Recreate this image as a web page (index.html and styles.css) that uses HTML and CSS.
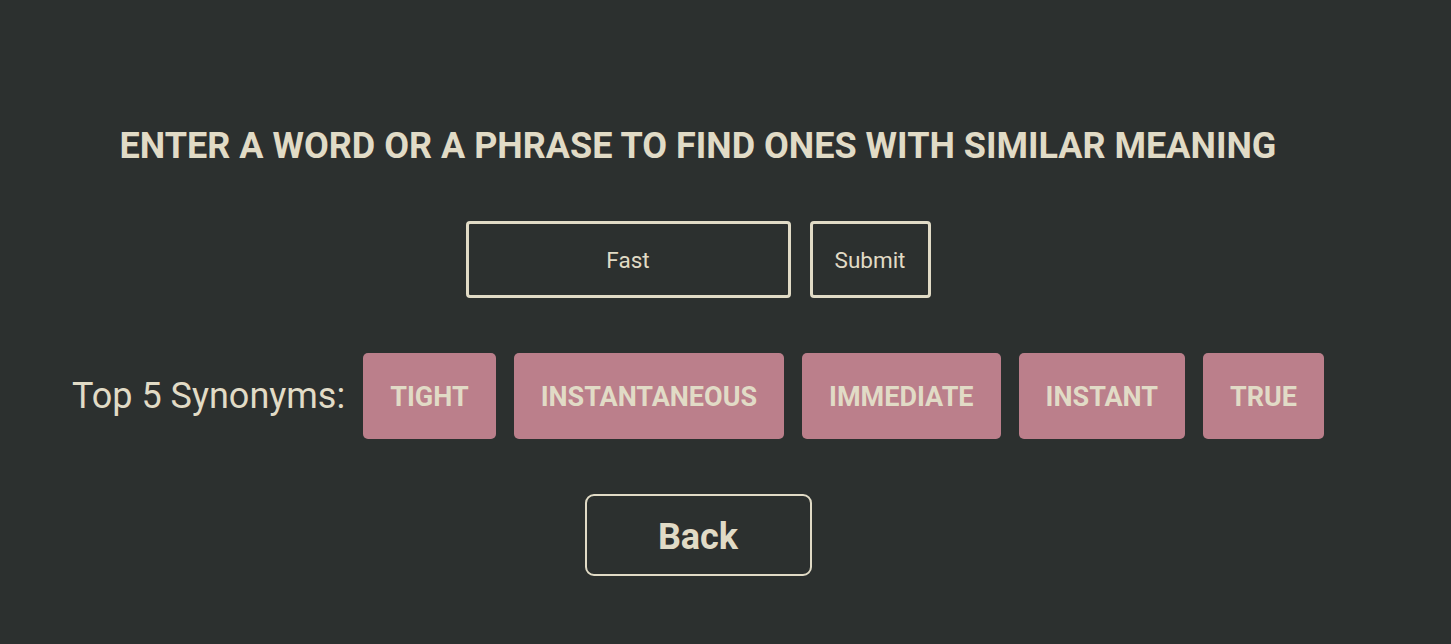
FILE: index.html
```html
<!DOCTYPE html>
<html>
<head>
<meta charset="utf-8">
<link rel="stylesheet" href="styles.css">
</head>
<body>
<div class="page">
  <h1 class="title">ENTER A WORD OR A PHRASE TO FIND ONES WITH SIMILAR MEANING</h1>
  <form class="search">
    <input class="field" type="text" value="Fast">
    <button class="submit" type="button">Submit</button>
  </form>
  <div class="results">
    <span class="label">Top 5 Synonyms:</span>
    <span class="chip">TIGHT</span>
    <span class="chip">INSTANTANEOUS</span>
    <span class="chip">IMMEDIATE</span>
    <span class="chip">INSTANT</span>
    <span class="chip">TRUE</span>
  </div>
  <button class="back" type="button">Back</button>
</div>
</body>
</html>
```
FILE: styles.css
```css
html, body {
  margin: 0;
  padding: 0;
  background: #2c302f;
  height: 100%;
}
body {
  font-family: Roboto, "Liberation Sans", sans-serif;
  color: #e1dbc6;
}
.page {
  width: 1396px;
  display: flex;
  flex-direction: column;
  align-items: center;
  padding-top: 125px;
}
.title {
  margin: 0;
  font-size: 36px;
  font-weight: 700;
  line-height: 42px;
}
.search {
  display: flex;
  gap: 19px;
  margin-top: 54px;
}
.field {
  box-sizing: border-box;
  width: 325px;
  height: 77px;
  border: 3px solid #e1dbc6;
  border-radius: 4px;
  background: transparent;
  color: #e1dbc6;
  font-family: inherit;
  font-size: 22.5px;
  text-align: center;
  outline: none;
}
.submit {
  box-sizing: border-box;
  width: 121px;
  height: 77px;
  border: 3px solid #e1dbc6;
  border-radius: 4px;
  background: transparent;
  color: #e1dbc6;
  font-family: inherit;
  font-size: 22.5px;
  padding: 0;
}
.results {
  display: flex;
  align-items: center;
  gap: 18px;
  margin-top: 55px;
}
.label {
  font-size: 36px;
  font-weight: 400;
}
.chip {
  display: flex;
  align-items: center;
  height: 86px;
  padding: 2px 27px 0;
  box-sizing: border-box;
  background: #bb7f8b;
  border-radius: 5px;
  font-size: 27px;
  font-weight: 700;
}
.back {
  box-sizing: border-box;
  margin-top: 55px;
  width: 227px;
  height: 82px;
  border: 2px solid #e1dbc6;
  border-radius: 9px;
  background: transparent;
  color: #e1dbc6;
  font-family: inherit;
  font-size: 36px;
  font-weight: 700;
  padding: 3px 0 0;
}
```
